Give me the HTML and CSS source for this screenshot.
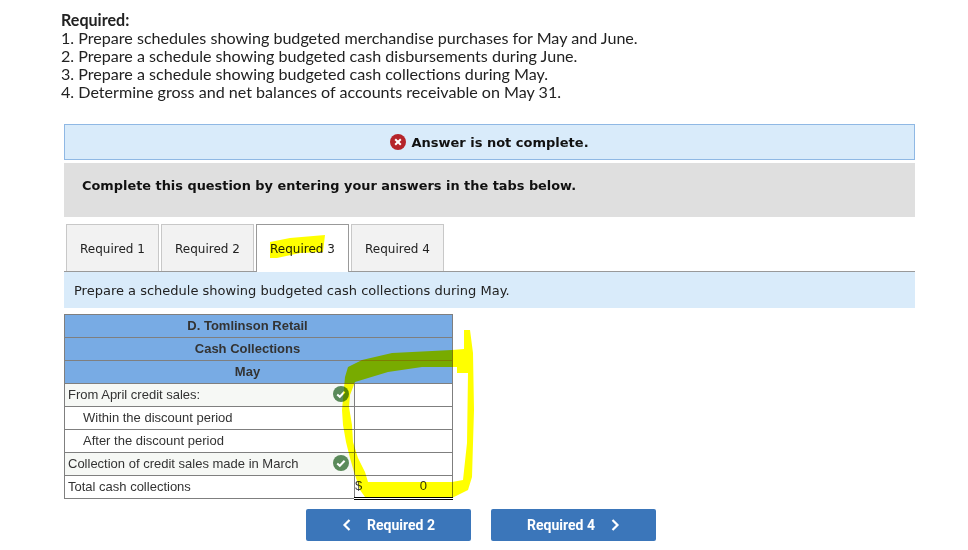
FILE: index.html
```html
<!DOCTYPE html>
<html>
<head lang="en">
    <meta charset="UTF-8">
    <title>Required 3</title>
    <link rel="stylesheet" href="styles.css">
</head>
<body>
    <div class="wrap">
        <div class="intro">
            <b>Required:</b>
            <p>1. Prepare schedules showing budgeted merchandise purchases for May and June.</p>
            <p>2. Prepare a schedule showing budgeted cash disbursements during June.</p>
            <p>3. Prepare a schedule showing budgeted cash collections during May.</p>
            <p>4. Determine gross and net balances of accounts receivable on May 31.</p>
        </div>
        <div class="alert">
            <svg class="x-icon" width="16" height="16" viewBox="0 0 16 16">
                <circle cx="8" cy="8" r="8" fill="#b5242a"/>
                <path d="M5.2 5.2l5.6 5.6M10.8 5.2l-5.6 5.6" stroke="#fff" stroke-width="2"/>
            </svg>
            Answer is not complete.
        </div>
        <div class="notice">Complete this question by entering your answers in the tabs below.</div>
        <div class="tabs">
            <div class="tab">Required 1</div>
            <div class="tab">Required 2</div>
            <div class="tab active">Required 3</div>
            <div class="tab">Required 4</div>
        </div>
        <div class="prompt">Prepare a schedule showing budgeted cash collections during May.</div>
        <table class="sheet">
            <colgroup><col class="col-label"><col class="col-value"></colgroup>
            <tr class="head"><th colspan="2">D. Tomlinson Retail</th></tr>
            <tr class="head"><th colspan="2">Cash Collections</th></tr>
            <tr class="head"><th colspan="2">May</th></tr>
            <tr class="ok">
                <td class="label"><div class="row">From April credit sales:
                    <svg width="16" height="16" viewBox="0 0 16 16"><circle cx="8" cy="8" r="8" fill="#5a8a5a"/><path d="M4.2 8.4l2.6 2.4 4.8-5" fill="none" stroke="#fff" stroke-width="2"/></svg>
                </div></td>
                <td></td>
            </tr>
            <tr><td class="label sub">Within the discount period</td><td></td></tr>
            <tr><td class="label sub">After the discount period</td><td></td></tr>
            <tr class="ok">
                <td class="label"><div class="row">Collection of credit sales made in March
                    <svg width="16" height="16" viewBox="0 0 16 16"><circle cx="8" cy="8" r="8" fill="#5a8a5a"/><path d="M4.2 8.4l2.6 2.4 4.8-5" fill="none" stroke="#fff" stroke-width="2"/></svg>
                </div></td>
                <td></td>
            </tr>
            <tr>
                <td class="label">Total cash collections</td>
                <td class="total"><div class="amount"><span>$</span><span>0</span></div></td>
            </tr>
        </table>
        <div class="nav">
            <div class="btn">
                <svg width="10" height="12" viewBox="0 0 10 12"><path d="M7.5 1L2.5 6l5 5" fill="none" stroke="#fff" stroke-width="2.2"/></svg>
                Required 2
            </div>
            <div class="btn">
                Required 4
                <svg width="10" height="12" viewBox="0 0 10 12"><path d="M2.5 1l5 5-5 5" fill="none" stroke="#fff" stroke-width="2.2"/></svg>
            </div>
        </div>
        <!-- yellow marker scribbles drawn over the page -->
        <svg class="marker" width="968" height="550" viewBox="0 0 968 550">
            <path d="M270 242L290 238L325 235L323 252L300 253L277 258L270 258Z" fill="#ffff00"/>
            <path fill-rule="evenodd" fill="#ffff00" d="M464 330L470 330L473 353L474 410L472 477L468 490L452 498L422 498L365 497L360 490L354 472L350 458L346 442L343 425L342 410L345 377L348 367L362 360L392 353L452 350L464 349Z
                M468 373L457 373L457 367L422 367L388 372L355 382L350 395L349 407L352 425L353 442L358 458L365 472L368 482L452 482L463 480L467 443Z"/>
        </svg>
    </div>
</body>
</html>
```

FILE: styles.css
```css
* {
    margin: 0;
    padding: 0;
    box-sizing: border-box;
}
body{
    background: #fff;
    overflow: hidden;
}
.wrap{
    position: relative;
    width: 968px;
    height: 550px;
    padding: 11px 53px 0 64px;
}
.intro{
    margin-left: -3px;
    font-family: "Lato", sans-serif;
    font-size: 16.1px;
    line-height: 18px;
    color: #222;
}
.alert{
    height: 36px;
    margin-top: 23px;
    border: 1px solid #8fb8e4;
    background: #d9ebfa;
    display: flex;
    align-items: center;
    justify-content: center;
    gap: 5px;
    font-family: "DejaVu Sans", sans-serif;
    font-size: 13px;
    font-weight: bold;
    color: #111;
}
.notice{
    height: 54px;
    margin-top: 3px;
    padding: 15px 18px 0;
    background: #dfdfdf;
    font-family: "DejaVu Sans", sans-serif;
    font-size: 12.9px;
    line-height: 16px;
    font-weight: bold;
    color: #111;
}
.tabs{
    display: flex;
    gap: 2px;
    margin-top: 7px;
    padding-left: 2px;
    border-bottom: 1px solid #999;
}
.tab{
    width: 93px;
    height: 47px;
    line-height: 48px;
    text-align: center;
    background: #f2f2f2;
    border: 1px solid #c8c8c8;
    border-bottom: 0;
    font-family: "DejaVu Sans", sans-serif;
    font-size: 12px;
    color: #222;
}
.tab.active{
    height: 48px;
    margin-bottom: -1px;
    background: #fff;
    border-color: #999;
}
.prompt{
    height: 36px;
    line-height: 37px;
    padding-left: 10px;
    background: #d9ebfa;
    font-family: "DejaVu Sans", sans-serif;
    font-size: 13px;
    color: #222;
}
.sheet{
    width: 388px;
    margin-top: 6px;
    border-collapse: collapse;
    table-layout: fixed;
    font-family: "Liberation Sans", sans-serif;
    font-size: 13px;
    color: #333;
}
.col-label{
    width: 290px;
}
.col-value{
    width: 98px;
}
.sheet th,.sheet td{
    height: 23px;
    padding-bottom: 2px;
    border: 1px solid #7f7f7f;
    vertical-align: middle;
}
.head th{
    padding-right: 22px;
    background: #78abe4;
    font-weight: bold;
    text-align: center;
}
.sheet .label{
    padding-left: 3px;
}
.sheet .sub{
    padding-left: 18px;
}
.ok .label{
    background: #f6f8f5;
}
.row{
    display: flex;
    align-items: center;
    justify-content: space-between;
    padding-right: 5px;
}
.sheet .total{
    border-top: 1px solid #000;
    border-bottom: 3px double #000;
}
.amount{
    display: flex;
    justify-content: space-between;
    padding: 0 25px 0 0;
}
.nav{
    display: flex;
    justify-content: center;
    gap: 20px;
    margin-top: 9px;
    padding-right: 17px;
}
.btn{
    width: 165px;
    height: 32px;
    display: flex;
    align-items: center;
    justify-content: center;
    gap: 15px;
    background: #3b76ba;
    border-radius: 2px;
    font-family: "Roboto", sans-serif;
    font-size: 14px;
    font-weight: bold;
    color: #fff;
}
.marker{
    position: absolute;
    left: 0;
    top: 0;
    mix-blend-mode: multiply;
    pointer-events: none;
}
```
